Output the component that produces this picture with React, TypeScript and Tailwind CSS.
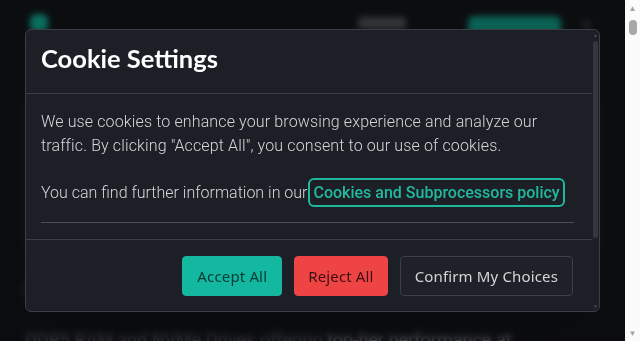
import React from 'react';

const sans = { fontFamily: 'Roboto, "Noto Sans", sans-serif' };

const Background: React.FC = () => {
  return (
    <div className="h-full bg-[#13161a]">
      {/* Header */}
      <header className="flex h-[60px] items-start pt-[14px] pl-[30px] pr-[35px]">
        <div className="h-[18px] w-[18px] rounded-md bg-[#14b8a0]" />
        <div className="ml-auto flex items-start">
          <span className="mt-[3px] h-[12px] w-[48px] rounded bg-[#55595f]" />
          <span className="ml-[62px] mt-[2px] h-[32px] w-[93px] rounded-md bg-[#12a38d]" />
          <span className="ml-[22px] mt-[7px] h-[7px] w-[7px] rounded-full bg-[#3f434a]" />
        </div>
      </header>

      {/* Hero */}
      <main className="px-[22px] pt-[40px]" style={sans}>
        <div className="h-[150px] rounded-lg bg-[#1b1f24]" />
        <h1 className="mt-[22px] text-[30px] font-bold leading-9 text-[#30353b]">Cloud Servers</h1>
        <p className="mt-[18px] pl-[3px] text-[18px] leading-7 text-[#60656d]">
          DDR5 RAM and NVMe Drives offering <span className="text-[#8f949b]">top-tier performance at</span>
        </p>
        <p className="pl-[3px] text-[18px] leading-7 text-[#60656d]">unbeatable prices for every workload.</p>
      </main>
    </div>
  );
};

const ModalScrollbar: React.FC = () => {
  return (
    <div className="flex w-[7px] shrink-0 flex-col items-center pt-[1px] pb-[1px]">
      <span className="text-[5px] leading-[8px] text-[#4a4d55]">▲</span>
      <div className="mt-[2px] h-[197px] w-[5px] rounded-full bg-[#34373e]" />
      <div className="flex-1" />
      <span className="text-[5px] leading-[8px] text-[#4a4d55]">▼</span>
    </div>
  );
};

const CookieModal: React.FC = () => {
  return (
    <div className="absolute inset-0 flex items-center justify-center bg-black/40 px-[25px] backdrop-blur-[3px]">
      <div className="flex h-[283px] w-full overflow-hidden rounded-md border border-[#3b3e46] bg-[#1d1f26] shadow-2xl">
        <div className="min-w-0 flex-1">
          {/* Header */}
          <div className="border-b border-[#3b3e46] px-[15px] pt-[12px] pb-[19px]">
            <h2
              className="text-[25.5px] font-bold leading-8 text-white"
              style={{ fontFamily: 'Lato, "Noto Sans", sans-serif' }}
            >
              Cookie Settings
            </h2>
          </div>

          {/* Body */}
          <div className="border-b border-[#3b3e46] pt-4 pb-4 pl-[15px] pr-[18px]" style={sans}>
            <div className="border-b border-[#4b4e56] pb-[17px] text-[16px] font-light leading-6 text-[#d4d6da]">
              <p className="tracking-[0.008em]">
                We use cookies to enhance your browsing experience and analyze our traffic. By clicking "Accept
                All", you consent to our use of cookies.
              </p>
              <p className="mt-[23px]">
                You can find further information in our
                <a
                  href="#"
                  className="ml-[1px] rounded-md border-2 border-[#1fb89f] px-[3px] py-[3px] font-medium text-[#22b89e]"
                >
                  Cookies and Subprocessors policy
                </a>
              </p>
            </div>
          </div>

          {/* Footer */}
          <div
            className="flex justify-end gap-3 pt-4 pb-[15px] pr-[19px] text-[15px] tracking-[0.01em]"
            style={{ fontFamily: '"Noto Sans", "Open Sans", sans-serif' }}
          >
            <button className="h-10 rounded border border-[#14b8a0] bg-[#14b8a0] px-[14px] text-[#0b3a34]">
              Accept All
            </button>
            <button className="h-10 rounded border border-[#ef4444] bg-[#ef4444] px-[13px] text-[#3e0f10]">
              Reject All
            </button>
            <button className="h-10 rounded border border-[#3d4048] bg-[#1f2129] px-[14px] text-[#d3d5d9]">
              Confirm My Choices
            </button>
          </div>

          {/* Preferences, below the visible part of the dialog */}
          <div className="border-t border-[#3b3e46] px-[15px] py-4 text-[14px] text-[#c4c7cc]" style={sans}>
            <div className="flex items-center justify-between py-2">
              <span>Strictly necessary</span>
              <span className="text-[#22b89e]">Always on</span>
            </div>
            <div className="flex items-center justify-between py-2">
              <span>Analytics</span>
              <span className="text-[#8b8f96]">Off</span>
            </div>
          </div>
        </div>
        <ModalScrollbar />
      </div>
    </div>
  );
};

const PageScrollbar: React.FC = () => {
  return (
    <div className="flex w-[15px] shrink-0 flex-col items-center bg-[#fbfbfb]">
      <span className="mt-[3px] text-[8px] leading-[10px] text-[#a3a3a3]">▲</span>
      <div className="mt-[7px] h-[15px] w-[8px] rounded-full bg-[#a8a8a8]" />
      <div className="flex-1" />
      <span className="mb-[3px] text-[8px] leading-[10px] text-[#a3a3a3]">▼</span>
    </div>
  );
};

const App: React.FC = () => {
  return (
    <div className="flex h-screen overflow-hidden">
      <div className="relative min-w-0 flex-1 overflow-hidden">
        <Background />
        <CookieModal />
      </div>
      <PageScrollbar />
    </div>
  );
};

export default App;
